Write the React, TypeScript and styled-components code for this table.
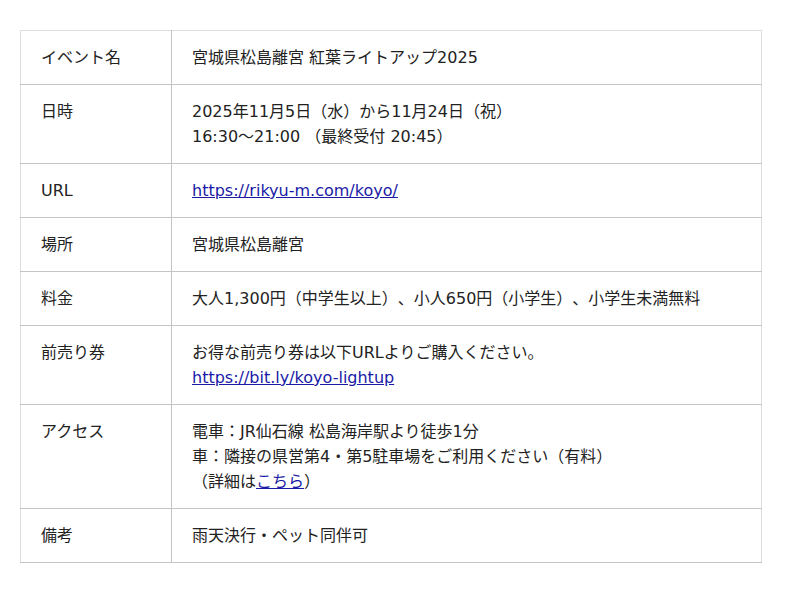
import React from "react";
import styled, { createGlobalStyle } from "styled-components";

const GlobalStyle = createGlobalStyle`
  body {
    margin: 0;
    background: #ffffff;
    font-family: "DejaVu Sans", "Noto Sans CJK JP", sans-serif;
    color: #222222;
  }
`;

const Page = styled.div`
  padding: 30px 0 30px 20px;
`;

const Table = styled.table`
  width: 742px;
  border-collapse: collapse;
  border: 1px solid #dddddd;
  font-size: 16px;
  line-height: 25px;
  text-spacing-trim: space-all;
`;

const Head = styled.th`
  width: 110px;
  padding: 14px 20px;
  text-align: left;
  vertical-align: top;
  font-weight: normal;
  border-bottom: 1px solid #c4c4c4;
  border-right: 1px solid #c4c4c4;
`;

const Cell = styled.td`
  padding: 14px 20px;
  vertical-align: top;
  border-bottom: 1px solid #c4c4c4;
`;

const Link = styled.a`
  color: #1a1aa6;
  text-decoration: underline;
`;

interface Row {
  label: string;
  value: React.ReactNode;
}

const rows: Row[] = [
  { label: "イベント名", value: "宮城県松島離宮 紅葉ライトアップ2025" },
  {
    label: "日時",
    value: (
      <>
        2025年11月5日（水）から11月24日（祝）
        <br />
        16:30〜21:00 （最終受付 20:45）
      </>
    ),
  },
  {
    label: "URL",
    value: <Link href="#">https://rikyu-m.com/koyo/</Link>,
  },
  { label: "場所", value: "宮城県松島離宮" },
  {
    label: "料金",
    value: "大人1,300円（中学生以上）、小人650円（小学生）、小学生未満無料",
  },
  {
    label: "前売り券",
    value: (
      <>
        お得な前売り券は以下URLよりご購入ください。
        <br />
        <Link href="#">https://bit.ly/koyo-lightup</Link>
      </>
    ),
  },
  {
    label: "アクセス",
    value: (
      <>
        電車：JR仙石線 松島海岸駅より徒歩1分
        <br />
        車：隣接の県営第4・第5駐車場をご利用ください（有料）
        <br />
        （詳細は<Link href="#">こちら</Link>）
      </>
    ),
  },
  { label: "備考", value: "雨天決行・ペット同伴可" },
];

const App: React.FC = () => {
  return (
    <>
      <GlobalStyle />
      <Page>
        <Table>
          <tbody>
            {rows.map((row) => (
              <tr key={row.label}>
                <Head>{row.label}</Head>
                <Cell>{row.value}</Cell>
              </tr>
            ))}
          </tbody>
        </Table>
      </Page>
    </>
  );
};

export default App;
